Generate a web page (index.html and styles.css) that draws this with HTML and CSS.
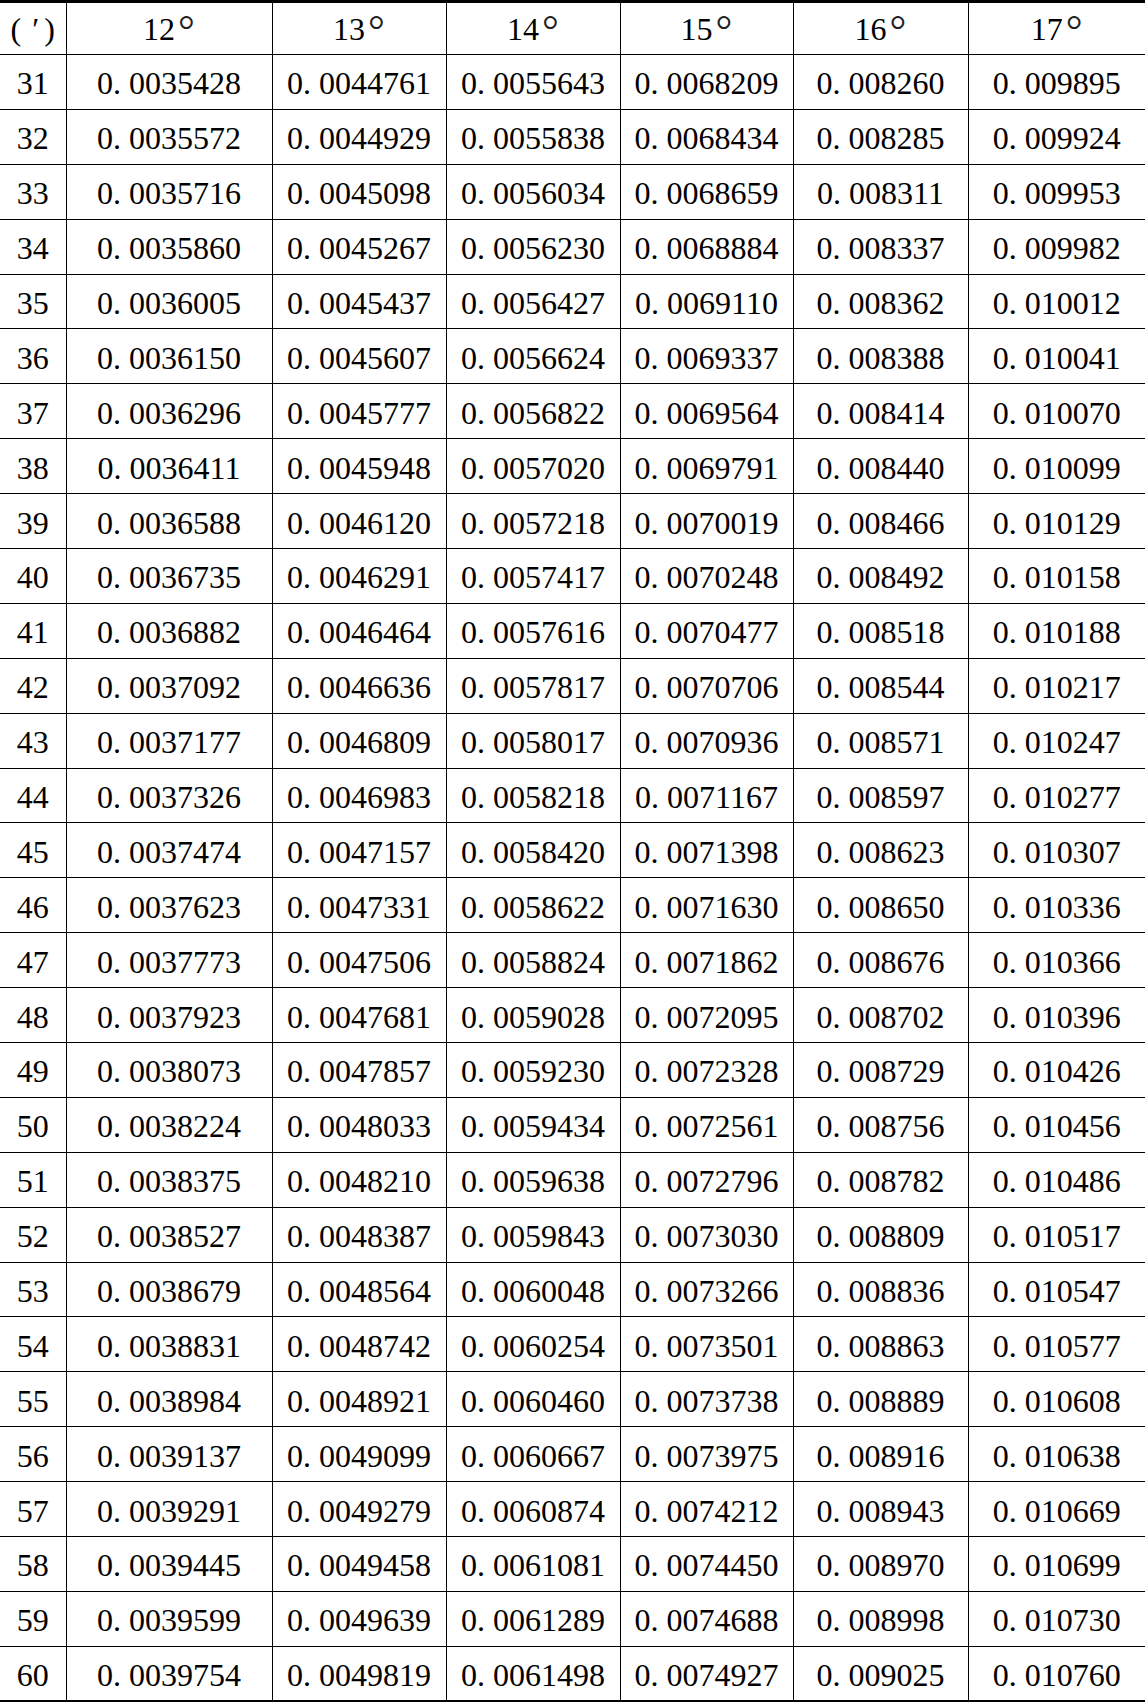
FILE: index.html
```html
<!DOCTYPE html>
<html>
<head>
<meta charset="utf-8">
<link rel="stylesheet" href="styles.css">
</head>
<body>
<table class="tbl">
<colgroup>
<col class="c0"><col class="c1"><col class="c2"><col class="c3"><col class="c4"><col class="c5"><col class="c6">
</colgroup>
<thead>
<tr class="head"><th class="first">(<span class="prime">′</span>)</th><th>12<span class="deg">°</span></th><th>13<span class="deg">°</span></th><th>14<span class="deg">°</span></th><th>15<span class="deg">°</span></th><th>16<span class="deg">°</span></th><th>17<span class="deg">°</span></th></tr>
</thead>
<tbody>
<tr><td class="first">31</td><td>0. 0035428</td><td>0. 0044761</td><td>0. 0055643</td><td>0. 0068209</td><td>0. 008260</td><td>0. 009895</td></tr>
<tr><td class="first">32</td><td>0. 0035572</td><td>0. 0044929</td><td>0. 0055838</td><td>0. 0068434</td><td>0. 008285</td><td>0. 009924</td></tr>
<tr><td class="first">33</td><td>0. 0035716</td><td>0. 0045098</td><td>0. 0056034</td><td>0. 0068659</td><td>0. 008311</td><td>0. 009953</td></tr>
<tr><td class="first">34</td><td>0. 0035860</td><td>0. 0045267</td><td>0. 0056230</td><td>0. 0068884</td><td>0. 008337</td><td>0. 009982</td></tr>
<tr><td class="first">35</td><td>0. 0036005</td><td>0. 0045437</td><td>0. 0056427</td><td>0. 0069110</td><td>0. 008362</td><td>0. 010012</td></tr>
<tr><td class="first">36</td><td>0. 0036150</td><td>0. 0045607</td><td>0. 0056624</td><td>0. 0069337</td><td>0. 008388</td><td>0. 010041</td></tr>
<tr><td class="first">37</td><td>0. 0036296</td><td>0. 0045777</td><td>0. 0056822</td><td>0. 0069564</td><td>0. 008414</td><td>0. 010070</td></tr>
<tr><td class="first">38</td><td>0. 0036411</td><td>0. 0045948</td><td>0. 0057020</td><td>0. 0069791</td><td>0. 008440</td><td>0. 010099</td></tr>
<tr><td class="first">39</td><td>0. 0036588</td><td>0. 0046120</td><td>0. 0057218</td><td>0. 0070019</td><td>0. 008466</td><td>0. 010129</td></tr>
<tr><td class="first">40</td><td>0. 0036735</td><td>0. 0046291</td><td>0. 0057417</td><td>0. 0070248</td><td>0. 008492</td><td>0. 010158</td></tr>
<tr><td class="first">41</td><td>0. 0036882</td><td>0. 0046464</td><td>0. 0057616</td><td>0. 0070477</td><td>0. 008518</td><td>0. 010188</td></tr>
<tr><td class="first">42</td><td>0. 0037092</td><td>0. 0046636</td><td>0. 0057817</td><td>0. 0070706</td><td>0. 008544</td><td>0. 010217</td></tr>
<tr><td class="first">43</td><td>0. 0037177</td><td>0. 0046809</td><td>0. 0058017</td><td>0. 0070936</td><td>0. 008571</td><td>0. 010247</td></tr>
<tr><td class="first">44</td><td>0. 0037326</td><td>0. 0046983</td><td>0. 0058218</td><td>0. 0071167</td><td>0. 008597</td><td>0. 010277</td></tr>
<tr><td class="first">45</td><td>0. 0037474</td><td>0. 0047157</td><td>0. 0058420</td><td>0. 0071398</td><td>0. 008623</td><td>0. 010307</td></tr>
<tr><td class="first">46</td><td>0. 0037623</td><td>0. 0047331</td><td>0. 0058622</td><td>0. 0071630</td><td>0. 008650</td><td>0. 010336</td></tr>
<tr><td class="first">47</td><td>0. 0037773</td><td>0. 0047506</td><td>0. 0058824</td><td>0. 0071862</td><td>0. 008676</td><td>0. 010366</td></tr>
<tr><td class="first">48</td><td>0. 0037923</td><td>0. 0047681</td><td>0. 0059028</td><td>0. 0072095</td><td>0. 008702</td><td>0. 010396</td></tr>
<tr><td class="first">49</td><td>0. 0038073</td><td>0. 0047857</td><td>0. 0059230</td><td>0. 0072328</td><td>0. 008729</td><td>0. 010426</td></tr>
<tr><td class="first">50</td><td>0. 0038224</td><td>0. 0048033</td><td>0. 0059434</td><td>0. 0072561</td><td>0. 008756</td><td>0. 010456</td></tr>
<tr><td class="first">51</td><td>0. 0038375</td><td>0. 0048210</td><td>0. 0059638</td><td>0. 0072796</td><td>0. 008782</td><td>0. 010486</td></tr>
<tr><td class="first">52</td><td>0. 0038527</td><td>0. 0048387</td><td>0. 0059843</td><td>0. 0073030</td><td>0. 008809</td><td>0. 010517</td></tr>
<tr><td class="first">53</td><td>0. 0038679</td><td>0. 0048564</td><td>0. 0060048</td><td>0. 0073266</td><td>0. 008836</td><td>0. 010547</td></tr>
<tr><td class="first">54</td><td>0. 0038831</td><td>0. 0048742</td><td>0. 0060254</td><td>0. 0073501</td><td>0. 008863</td><td>0. 010577</td></tr>
<tr><td class="first">55</td><td>0. 0038984</td><td>0. 0048921</td><td>0. 0060460</td><td>0. 0073738</td><td>0. 008889</td><td>0. 010608</td></tr>
<tr><td class="first">56</td><td>0. 0039137</td><td>0. 0049099</td><td>0. 0060667</td><td>0. 0073975</td><td>0. 008916</td><td>0. 010638</td></tr>
<tr><td class="first">57</td><td>0. 0039291</td><td>0. 0049279</td><td>0. 0060874</td><td>0. 0074212</td><td>0. 008943</td><td>0. 010669</td></tr>
<tr><td class="first">58</td><td>0. 0039445</td><td>0. 0049458</td><td>0. 0061081</td><td>0. 0074450</td><td>0. 008970</td><td>0. 010699</td></tr>
<tr><td class="first">59</td><td>0. 0039599</td><td>0. 0049639</td><td>0. 0061289</td><td>0. 0074688</td><td>0. 008998</td><td>0. 010730</td></tr>
<tr><td class="first">60</td><td>0. 0039754</td><td>0. 0049819</td><td>0. 0061498</td><td>0. 0074927</td><td>0. 009025</td><td>0. 010760</td></tr>
</tbody>
</table>
</body>
</html>
```
FILE: styles.css
```css
html, body {
  margin: 0;
  padding: 0;
  background: #fff;
}
.tbl {
  width: 1145px;
  border-collapse: collapse;
  table-layout: fixed;
  font-family: "Liberation Serif", "Times New Roman", serif;
  font-size: 32px;
  color: #000;
  border-top: 3px solid #000;
  border-bottom: 3px solid #000;
}
.c0 { width: 66px; }
.c1 { width: 206px; }
.c2 { width: 174px; }
.c3 { width: 174px; }
.c4 { width: 173px; }
.c5 { width: 175px; }
.c6 { width: 177px; }
.tbl th, .tbl td {
  font-weight: normal;
  text-align: center;
  vertical-align: middle;
  padding: 0;
  border: 1px solid #000;
  white-space: nowrap;
  line-height: 1;
}
.tbl th:first-child, .tbl td:first-child { border-left: none; }
.tbl th:last-child, .tbl td:last-child { border-right: none; }
.tbl thead th { border-top: 3px solid #000; }
.tbl tbody tr:last-child td { border-bottom: 3px solid #000; }
.head { height: 53px; }
.tbl tbody tr { height: 54.9px; }
.tbl td { padding-top: 3px; }
.prime {
  display: inline-block;
  padding: 0 5px 0 11px;
}
.deg {
  font-size: 42px;
  line-height: 0;
  vertical-align: -4px;
  padding-left: 3px;
  color: #222;
}
```
